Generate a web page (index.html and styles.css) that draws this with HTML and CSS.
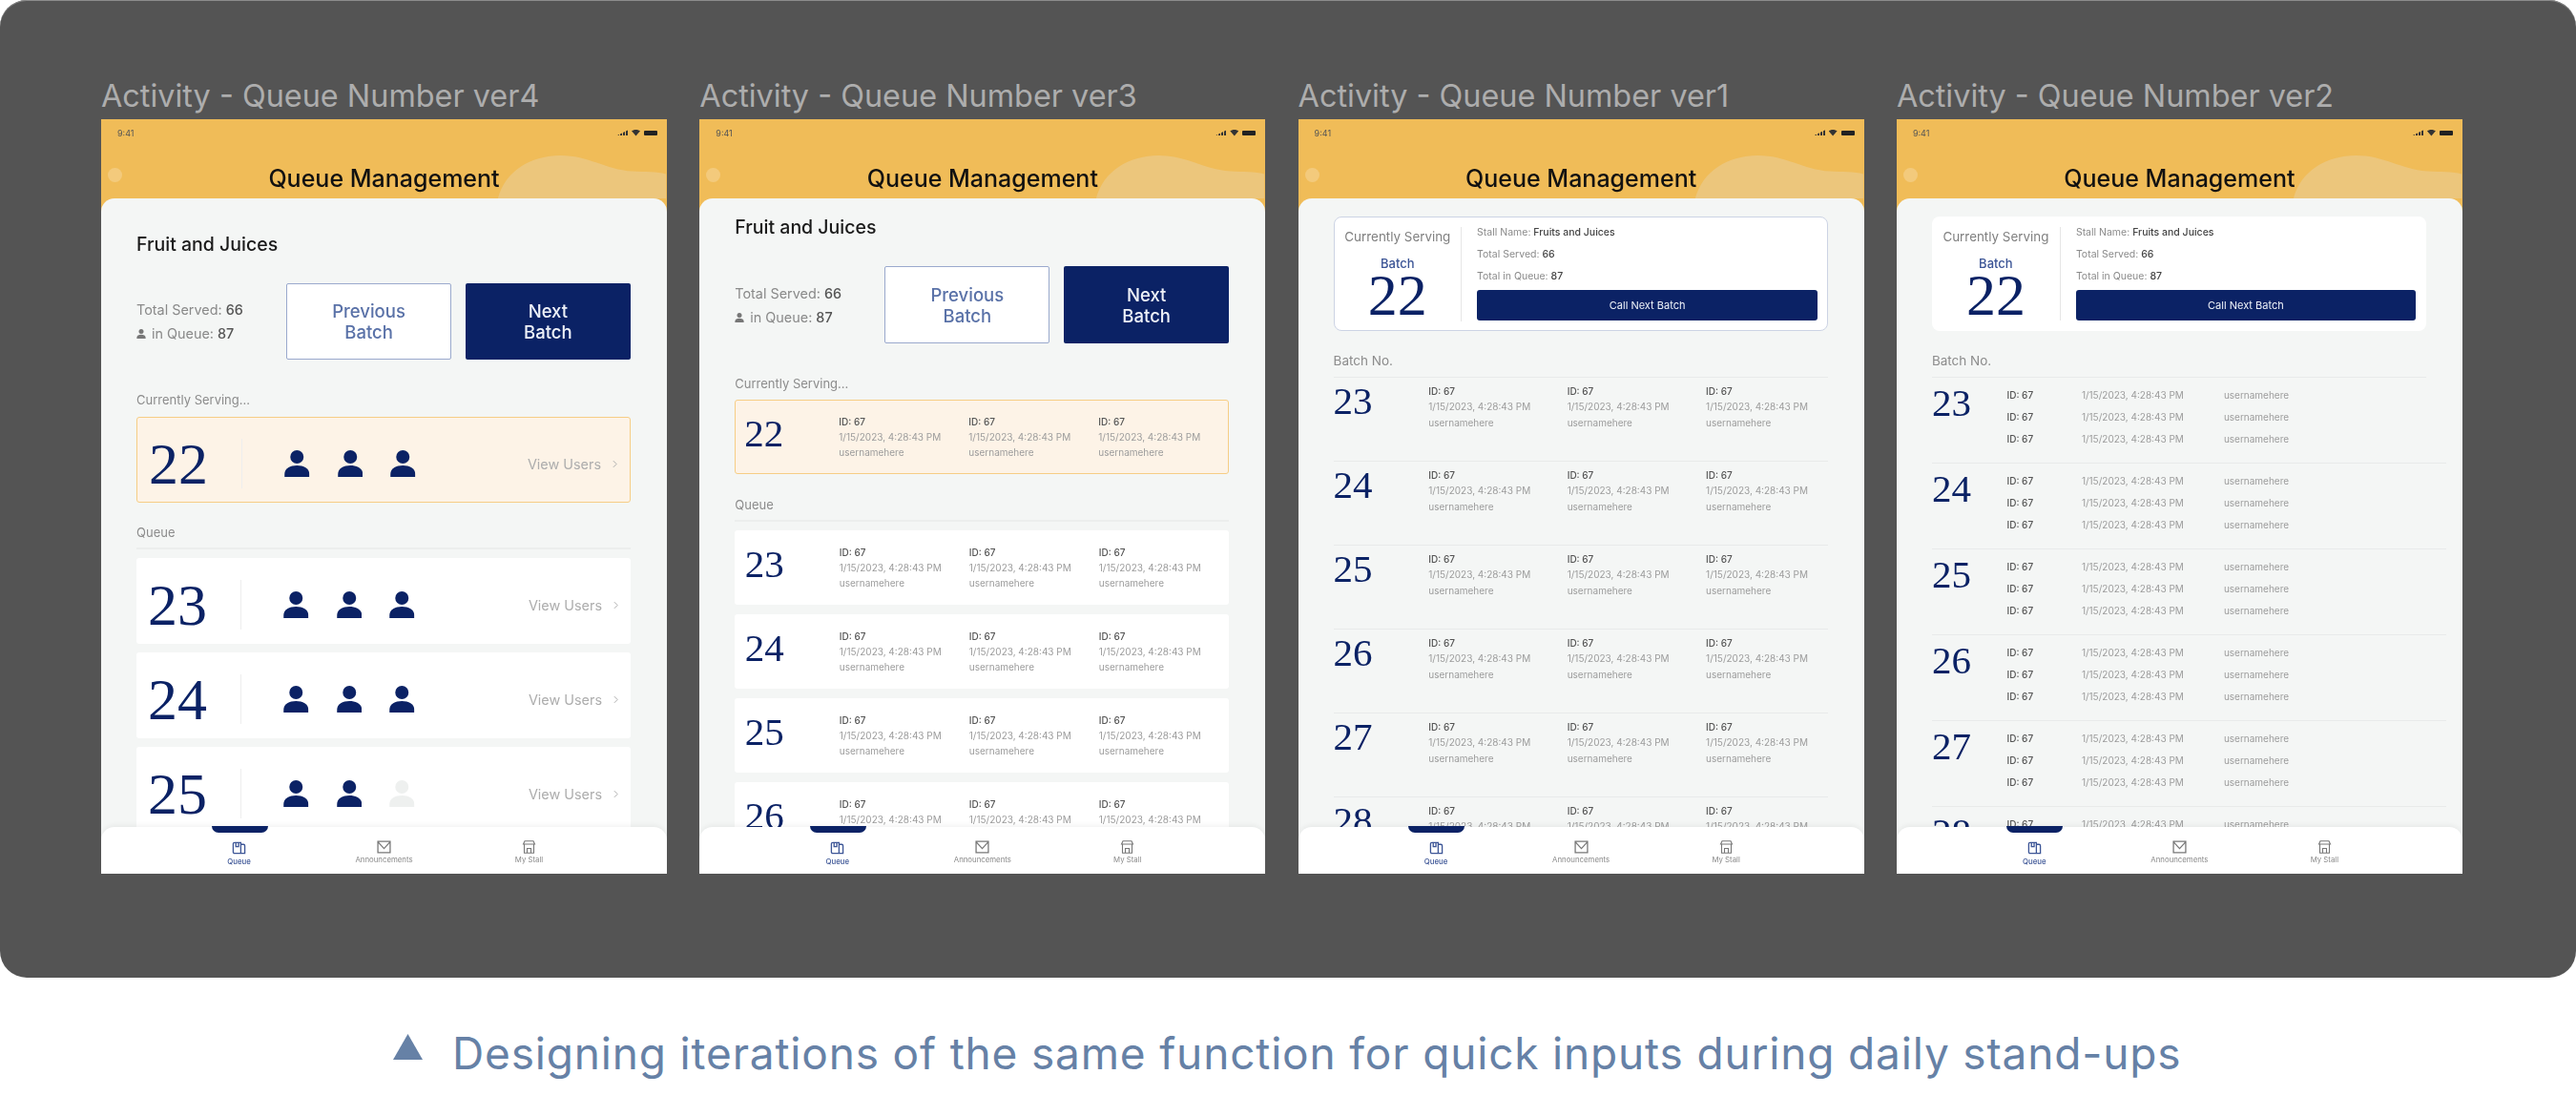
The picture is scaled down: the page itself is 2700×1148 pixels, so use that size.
FILE: index.html
```html
<!DOCTYPE html>
<html lang="en">
<head>
    <meta charset="UTF-8">
    <title>Activity - Queue Number</title>
    <link rel="stylesheet" href="styles.css">
</head>
<body>
    <svg class="defs" width="0" height="0">
        <symbol id="person" viewBox="0 0 26 28">
            <circle cx="13" cy="7" r="7"/>
            <path d="M0 28v-3C0 19 6 16 13 16s13 3 13 9v3z"/>
        </symbol>
        <symbol id="blob" viewBox="0 0 180 48">
            <path d="M0 48C8 18 36 2 67 2c30 0 48 15 77 17 14 1 26 0 36 3v26z"/>
        </symbol>
        <symbol id="icon-queue" viewBox="0 0 16 14">
            <path d="M1.500 2.500a1.500 1.500 0 0 1 1.500-1.500h7v12H3a1.500 1.500 0 0 1-1.500-1.500zM10 3h3a1.500 1.500 0 0 1 1.500 1.500V13H10M4.500 1v4.500h3V1" fill="none" stroke="currentColor" stroke-width="1.400"/>
        </symbol>
        <symbol id="icon-mail" viewBox="0 0 14 13">
            <path d="M1 1h12v11H1zM1 1.500l6 6.500 6-6.500" fill="none" stroke="currentColor" stroke-width="1.200"/>
        </symbol>
        <symbol id="icon-stall" viewBox="0 0 14 14">
            <path d="M2.500 .7h9l1.500 3.300H1zM2 4v9.300h10V4M5 13.300V8.500h4v4.800" fill="none" stroke="currentColor" stroke-width="1.100"/>
        </symbol>
    </svg>

    <div class="board">

        <!-- ver4 -->
        <section class="artboard">
            <h2 class="artboard-name">Activity - Queue Number ver4</h2>
            <div class="screen">
                <div class="status">
                    <span>9:41</span>
                    <span class="status-icons"><i class="signal"></i><i class="wifi"></i><i class="battery"></i></span>
                </div>
                <div class="header">
                    <i class="dot"></i>
                    <svg class="blob"><use href="#blob"/></svg>
                    <h1>Queue Management</h1>
                </div>
                <div class="sheet sheet-title-low">
                    <h3 class="stall-name">Fruit and Juices</h3>
                    <div class="summary">
                        <div class="stats">
                            <p>Total Served: <b>66</b></p>
                            <p><svg class="mini-person"><use href="#person"/></svg>in Queue: <b>87</b></p>
                        </div>
                        <button class="btn btn-outline">Previous<br>Batch</button>
                        <button class="btn btn-solid">Next<br>Batch</button>
                    </div>
                    <div class="section-label serving-label">Currently Serving...</div>
                    <div class="batch-card batch-serving">
                        <span class="batch-no">22</span><i class="batch-rule"></i>
                        <span class="people"><svg><use href="#person"/></svg><svg><use href="#person"/></svg><svg><use href="#person"/></svg></span>
                        <span class="view-users">View Users<svg class="chevron" viewBox="0 0 6 10"><path d="M1 1l4 4-4 4"/></svg></span>
                    </div>
                    <div class="section-label queue-label">Queue</div>
                    <div class="batch-card">
                        <span class="batch-no">23</span><i class="batch-rule"></i>
                        <span class="people"><svg><use href="#person"/></svg><svg><use href="#person"/></svg><svg><use href="#person"/></svg></span>
                        <span class="view-users">View Users<svg class="chevron" viewBox="0 0 6 10"><path d="M1 1l4 4-4 4"/></svg></span>
                    </div>
                    <div class="batch-card">
                        <span class="batch-no">24</span><i class="batch-rule"></i>
                        <span class="people"><svg><use href="#person"/></svg><svg><use href="#person"/></svg><svg><use href="#person"/></svg></span>
                        <span class="view-users">View Users<svg class="chevron" viewBox="0 0 6 10"><path d="M1 1l4 4-4 4"/></svg></span>
                    </div>
                    <div class="batch-card">
                        <span class="batch-no">25</span><i class="batch-rule"></i>
                        <span class="people"><svg><use href="#person"/></svg><svg><use href="#person"/></svg><svg class="empty"><use href="#person"/></svg></span>
                        <span class="view-users">View Users<svg class="chevron" viewBox="0 0 6 10"><path d="M1 1l4 4-4 4"/></svg></span>
                    </div>
                </div>
                <nav class="tabs">
                    <a class="tab active"><svg><use href="#icon-queue"/></svg>Queue</a>
                    <a class="tab"><svg><use href="#icon-mail"/></svg>Announcements</a>
                    <a class="tab"><svg><use href="#icon-stall"/></svg>My Stall</a>
                </nav>
            </div>
        </section>

        <!-- ver3 -->
        <section class="artboard">
            <h2 class="artboard-name">Activity - Queue Number ver3</h2>
            <div class="screen">
                <div class="status">
                    <span>9:41</span>
                    <span class="status-icons"><i class="signal"></i><i class="wifi"></i><i class="battery"></i></span>
                </div>
                <div class="header">
                    <i class="dot"></i>
                    <svg class="blob"><use href="#blob"/></svg>
                    <h1>Queue Management</h1>
                </div>
                <div class="sheet sheet-title-high">
                    <h3 class="stall-name">Fruit and Juices</h3>
                    <div class="summary summary-tall">
                        <div class="stats">
                            <p>Total Served: <b>66</b></p>
                            <p><svg class="mini-person"><use href="#person"/></svg>in Queue: <b>87</b></p>
                        </div>
                        <button class="btn btn-outline">Previous<br>Batch</button>
                        <button class="btn btn-solid">Next<br>Batch</button>
                    </div>
                    <div class="section-label serving-label-tight">Currently Serving...</div>
                    <div class="entry-card entry-serving">
                        <span class="batch-small">22</span>
                        <div class="entry"><b>ID: 67</b><span>1/15/2023, 4:28:43 PM</span><span>usernamehere</span></div>
                        <div class="entry"><b>ID: 67</b><span>1/15/2023, 4:28:43 PM</span><span>usernamehere</span></div>
                        <div class="entry"><b>ID: 67</b><span>1/15/2023, 4:28:43 PM</span><span>usernamehere</span></div>
                    </div>
                    <div class="section-label queue-label-wide">Queue</div>
                    <div class="entry-card">
                        <span class="batch-small">23</span>
                        <div class="entry"><b>ID: 67</b><span>1/15/2023, 4:28:43 PM</span><span>usernamehere</span></div>
                        <div class="entry"><b>ID: 67</b><span>1/15/2023, 4:28:43 PM</span><span>usernamehere</span></div>
                        <div class="entry"><b>ID: 67</b><span>1/15/2023, 4:28:43 PM</span><span>usernamehere</span></div>
                    </div>
                    <div class="entry-card">
                        <span class="batch-small">24</span>
                        <div class="entry"><b>ID: 67</b><span>1/15/2023, 4:28:43 PM</span><span>usernamehere</span></div>
                        <div class="entry"><b>ID: 67</b><span>1/15/2023, 4:28:43 PM</span><span>usernamehere</span></div>
                        <div class="entry"><b>ID: 67</b><span>1/15/2023, 4:28:43 PM</span><span>usernamehere</span></div>
                    </div>
                    <div class="entry-card">
                        <span class="batch-small">25</span>
                        <div class="entry"><b>ID: 67</b><span>1/15/2023, 4:28:43 PM</span><span>usernamehere</span></div>
                        <div class="entry"><b>ID: 67</b><span>1/15/2023, 4:28:43 PM</span><span>usernamehere</span></div>
                        <div class="entry"><b>ID: 67</b><span>1/15/2023, 4:28:43 PM</span><span>usernamehere</span></div>
                    </div>
                    <div class="entry-card">
                        <span class="batch-small">26</span>
                        <div class="entry"><b>ID: 67</b><span>1/15/2023, 4:28:43 PM</span><span>usernamehere</span></div>
                        <div class="entry"><b>ID: 67</b><span>1/15/2023, 4:28:43 PM</span><span>usernamehere</span></div>
                        <div class="entry"><b>ID: 67</b><span>1/15/2023, 4:28:43 PM</span><span>usernamehere</span></div>
                    </div>
                </div>
                <nav class="tabs">
                    <a class="tab active"><svg><use href="#icon-queue"/></svg>Queue</a>
                    <a class="tab"><svg><use href="#icon-mail"/></svg>Announcements</a>
                    <a class="tab"><svg><use href="#icon-stall"/></svg>My Stall</a>
                </nav>
            </div>
        </section>

        <!-- ver1 -->
        <section class="artboard">
            <h2 class="artboard-name">Activity - Queue Number ver1</h2>
            <div class="screen">
                <div class="status">
                    <span>9:41</span>
                    <span class="status-icons"><i class="signal"></i><i class="wifi"></i><i class="battery"></i></span>
                </div>
                <div class="header">
                    <i class="dot"></i>
                    <svg class="blob"><use href="#blob"/></svg>
                    <h1>Queue Management</h1>
                </div>
                <div class="sheet sheet-box">
                    <div class="serving-box serving-box-line">
                        <div class="serving-now">
                            <div class="serving-title">Currently Serving</div>
                            <div class="serving-batch">Batch</div>
                            <div class="serving-no">22</div>
                        </div>
                        <div class="serving-info">
                            <p>Stall Name: <b>Fruits and Juices</b></p>
                            <p>Total Served: <b>66</b></p>
                            <p>Total in Queue: <b>87</b></p>
                            <button class="btn-call">Call Next Batch</button>
                        </div>
                    </div>
                    <div class="section-label list-label">Batch No.</div>
                    <div class="list-row">
                        <span class="batch-small">23</span>
                        <div class="entry"><b>ID: 67</b><span>1/15/2023, 4:28:43 PM</span><span>usernamehere</span></div>
                        <div class="entry"><b>ID: 67</b><span>1/15/2023, 4:28:43 PM</span><span>usernamehere</span></div>
                        <div class="entry"><b>ID: 67</b><span>1/15/2023, 4:28:43 PM</span><span>usernamehere</span></div>
                    </div>
                    <div class="list-row">
                        <span class="batch-small">24</span>
                        <div class="entry"><b>ID: 67</b><span>1/15/2023, 4:28:43 PM</span><span>usernamehere</span></div>
                        <div class="entry"><b>ID: 67</b><span>1/15/2023, 4:28:43 PM</span><span>usernamehere</span></div>
                        <div class="entry"><b>ID: 67</b><span>1/15/2023, 4:28:43 PM</span><span>usernamehere</span></div>
                    </div>
                    <div class="list-row">
                        <span class="batch-small">25</span>
                        <div class="entry"><b>ID: 67</b><span>1/15/2023, 4:28:43 PM</span><span>usernamehere</span></div>
                        <div class="entry"><b>ID: 67</b><span>1/15/2023, 4:28:43 PM</span><span>usernamehere</span></div>
                        <div class="entry"><b>ID: 67</b><span>1/15/2023, 4:28:43 PM</span><span>usernamehere</span></div>
                    </div>
                    <div class="list-row">
                        <span class="batch-small">26</span>
                        <div class="entry"><b>ID: 67</b><span>1/15/2023, 4:28:43 PM</span><span>usernamehere</span></div>
                        <div class="entry"><b>ID: 67</b><span>1/15/2023, 4:28:43 PM</span><span>usernamehere</span></div>
                        <div class="entry"><b>ID: 67</b><span>1/15/2023, 4:28:43 PM</span><span>usernamehere</span></div>
                    </div>
                    <div class="list-row">
                        <span class="batch-small">27</span>
                        <div class="entry"><b>ID: 67</b><span>1/15/2023, 4:28:43 PM</span><span>usernamehere</span></div>
                        <div class="entry"><b>ID: 67</b><span>1/15/2023, 4:28:43 PM</span><span>usernamehere</span></div>
                        <div class="entry"><b>ID: 67</b><span>1/15/2023, 4:28:43 PM</span><span>usernamehere</span></div>
                    </div>
                    <div class="list-row">
                        <span class="batch-small">28</span>
                        <div class="entry"><b>ID: 67</b><span>1/15/2023, 4:28:43 PM</span><span>usernamehere</span></div>
                        <div class="entry"><b>ID: 67</b><span>1/15/2023, 4:28:43 PM</span><span>usernamehere</span></div>
                        <div class="entry"><b>ID: 67</b><span>1/15/2023, 4:28:43 PM</span><span>usernamehere</span></div>
                    </div>
                </div>
                <nav class="tabs">
                    <a class="tab active"><svg><use href="#icon-queue"/></svg>Queue</a>
                    <a class="tab"><svg><use href="#icon-mail"/></svg>Announcements</a>
                    <a class="tab"><svg><use href="#icon-stall"/></svg>My Stall</a>
                </nav>
            </div>
        </section>

        <!-- ver2 -->
        <section class="artboard">
            <h2 class="artboard-name">Activity - Queue Number ver2</h2>
            <div class="screen">
                <div class="status">
                    <span>9:41</span>
                    <span class="status-icons"><i class="signal"></i><i class="wifi"></i><i class="battery"></i></span>
                </div>
                <div class="header">
                    <i class="dot"></i>
                    <svg class="blob"><use href="#blob"/></svg>
                    <h1>Queue Management</h1>
                </div>
                <div class="sheet sheet-box">
                    <div class="serving-box">
                        <div class="serving-now">
                            <div class="serving-title">Currently Serving</div>
                            <div class="serving-batch">Batch</div>
                            <div class="serving-no">22</div>
                        </div>
                        <div class="serving-info">
                            <p>Stall Name: <b>Fruits and Juices</b></p>
                            <p>Total Served: <b>66</b></p>
                            <p>Total in Queue: <b>87</b></p>
                            <button class="btn-call">Call Next Batch</button>
                        </div>
                    </div>
                    <div class="section-label list-label">Batch No.</div>
                    <div class="table-row">
                        <span class="batch-small">23</span>
                        <div class="table-lines">
                            <b>ID: 67</b><span>1/15/2023, 4:28:43 PM</span><span>usernamehere</span>
                            <b>ID: 67</b><span>1/15/2023, 4:28:43 PM</span><span>usernamehere</span>
                            <b>ID: 67</b><span>1/15/2023, 4:28:43 PM</span><span>usernamehere</span>
                        </div>
                    </div>
                    <div class="table-row">
                        <span class="batch-small">24</span>
                        <div class="table-lines">
                            <b>ID: 67</b><span>1/15/2023, 4:28:43 PM</span><span>usernamehere</span>
                            <b>ID: 67</b><span>1/15/2023, 4:28:43 PM</span><span>usernamehere</span>
                            <b>ID: 67</b><span>1/15/2023, 4:28:43 PM</span><span>usernamehere</span>
                        </div>
                    </div>
                    <div class="table-row">
                        <span class="batch-small">25</span>
                        <div class="table-lines">
                            <b>ID: 67</b><span>1/15/2023, 4:28:43 PM</span><span>usernamehere</span>
                            <b>ID: 67</b><span>1/15/2023, 4:28:43 PM</span><span>usernamehere</span>
                            <b>ID: 67</b><span>1/15/2023, 4:28:43 PM</span><span>usernamehere</span>
                        </div>
                    </div>
                    <div class="table-row">
                        <span class="batch-small">26</span>
                        <div class="table-lines">
                            <b>ID: 67</b><span>1/15/2023, 4:28:43 PM</span><span>usernamehere</span>
                            <b>ID: 67</b><span>1/15/2023, 4:28:43 PM</span><span>usernamehere</span>
                            <b>ID: 67</b><span>1/15/2023, 4:28:43 PM</span><span>usernamehere</span>
                        </div>
                    </div>
                    <div class="table-row">
                        <span class="batch-small">27</span>
                        <div class="table-lines">
                            <b>ID: 67</b><span>1/15/2023, 4:28:43 PM</span><span>usernamehere</span>
                            <b>ID: 67</b><span>1/15/2023, 4:28:43 PM</span><span>usernamehere</span>
                            <b>ID: 67</b><span>1/15/2023, 4:28:43 PM</span><span>usernamehere</span>
                        </div>
                    </div>
                    <div class="table-row">
                        <span class="batch-small">28</span>
                        <div class="table-lines">
                            <b>ID: 67</b><span>1/15/2023, 4:28:43 PM</span><span>usernamehere</span>
                            <b>ID: 67</b><span>1/15/2023, 4:28:43 PM</span><span>usernamehere</span>
                            <b>ID: 67</b><span>1/15/2023, 4:28:43 PM</span><span>usernamehere</span>
                        </div>
                    </div>
                </div>
                <nav class="tabs">
                    <a class="tab active"><svg><use href="#icon-queue"/></svg>Queue</a>
                    <a class="tab"><svg><use href="#icon-mail"/></svg>Announcements</a>
                    <a class="tab"><svg><use href="#icon-stall"/></svg>My Stall</a>
                </nav>
            </div>
        </section>
    </div>

    <p class="caption">
        <svg class="caption-mark" viewBox="0 0 31 27"><path d="M15.500 0L31 27H0z"/></svg>
        Designing iterations of the same function for quick inputs during daily stand-ups
    </p>
</body>
</html>
```

FILE: styles.css
```css
* {
    box-sizing: border-box;
}
body {
    margin: 0;
    width: 2700px;
    height: 1148px;
    overflow: hidden;
    background-color: #fff;
    font-family: Inter, "Liberation Sans", sans-serif;
}
p, h1, h2, h3 {
    margin: 0;
}
.defs {
    position: absolute;
}

/* dark canvas */
.board {
    display: flex;
    gap: 34.3px;
    height: 1025px;
    padding: 80px 0 0 106px;
    background-color: #545454;
    border-radius: 28px;
    box-shadow: inset 0 1px 0 #8c8c8c;
}
.artboard {
    width: 593px;
}
.artboard-name {
    height: 42px;
    margin-bottom: 3px;
    font-size: 32.4px;
    font-weight: 400;
    line-height: 42px;
    color: #adadad;
    white-space: nowrap;
}
.screen {
    position: relative;
    height: 791px;
    overflow: hidden;
    background-color: #f0bc58;
    filter: blur(0.35px);
}

/* status + header */
.status {
    display: flex;
    justify-content: space-between;
    align-items: center;
    height: 28px;
    padding: 0 10px 0 17px;
    font-size: 9px;
    color: #555;
}
.status-icons {
    display: flex;
    align-items: center;
    gap: 3px;
}
.signal {
    width: 12px;
    height: 6px;
    background: repeating-linear-gradient(to right, #333 0 2px, transparent 2px 3px);
    clip-path: polygon(0 100%, 100% 0, 100% 100%);
}
.wifi {
    width: 9px;
    height: 7px;
    background-color: #333;
    clip-path: polygon(0 25%, 50% 0, 100% 25%, 50% 100%);
}
.battery {
    width: 14px;
    height: 5px;
    margin-left: 1px;
    background-color: #222;
    border-radius: 1px;
}
.header {
    position: relative;
    height: 55px;
    padding-top: 19px;
}
.header h1 {
    position: relative;
    font-size: 25px;
    font-weight: 500;
    line-height: 30px;
    text-align: center;
    color: #111;
}
.dot {
    position: absolute;
    top: 23px;
    left: 7px;
    width: 15px;
    height: 15px;
    background-color: #f3ca7c;
    border-radius: 50%;
}
.blob {
    position: absolute;
    right: 0;
    bottom: 0;
    width: 178px;
    height: 47px;
    fill: #ecc67c;
}

/* sheet */
.sheet {
    height: 708px;
    padding: 0 38px 0 37px;
    overflow: hidden;
    background-color: #f4f6f5;
    border-radius: 14px 14px 0 0;
}
.sheet-title-low {
    padding-top: 33px;
}
.sheet-title-high {
    padding-top: 15px;
}
.sheet-box {
    padding-top: 19px;
}
.stall-name {
    font-size: 19.5px;
    font-weight: 500;
    line-height: 30px;
    color: #1a1a1a;
}
.summary {
    display: flex;
    align-items: stretch;
    gap: 14.5px;
    height: 80px;
    margin-top: 26px;
}
.summary-tall {
    height: 81px;
}
.stats {
    display: flex;
    flex-direction: column;
    justify-content: center;
    width: 142.5px;
    font-size: 14.4px;
    line-height: 25px;
    color: #8a8a8a;
}
.stats b {
    font-weight: 500;
    color: #555;
}
.mini-person {
    width: 10px;
    height: 10px;
    margin-right: 6px;
    fill: #777;
}
.btn {
    width: 173.5px;
    padding: 0;
    font-family: inherit;
    font-size: 18.5px;
    font-weight: 500;
    line-height: 22px;
    border-radius: 2px;
}
.btn-outline {
    color: #5a72a8;
    background-color: #fff;
    border: 1.5px solid #9aa9cd;
}
.btn-solid {
    color: #eef1f8;
    background-color: #0b2265;
    border: 0;
}
.section-label {
    font-size: 13px;
    line-height: 20px;
    color: #8c8c8c;
}
.serving-label {
    margin-top: 32px;
    margin-bottom: 8px;
}
.serving-label-tight {
    margin-top: 32px;
    margin-bottom: 7px;
}
.queue-label {
    margin-top: 21px;
    margin-bottom: 9px;
    padding-bottom: 6px;
    border-bottom: 2px solid #eceeed;
}
.queue-label-wide {
    margin-top: 22px;
    margin-bottom: 9px;
    padding-bottom: 6px;
    border-bottom: 2px solid #eceeed;
}

/* ver4 rows */
.batch-card {
    display: flex;
    align-items: center;
    height: 90px;
    margin-bottom: 9px;
    padding: 8px 0 0 12px;
    background-color: #fff;
    border-radius: 3px;
}
.batch-serving {
    background-color: #fdf3e7;
    border: 1.5px solid #f6cd85;
}
.batch-no {
    width: 97px;
    font-family: "Liberation Serif", serif;
    font-size: 62px;
    line-height: 60px;
    color: #0b2265;
}
.batch-rule {
    width: 1px;
    height: 52px;
    background-color: #eeeeee;
}
.people {
    display: flex;
    gap: 29.2px;
    margin-left: 44px;
}
.people svg {
    width: 26.5px;
    height: 28px;
    fill: #0b2265;
}
.people .empty {
    fill: #eef0ef;
}
.view-users {
    display: flex;
    align-items: center;
    margin-left: auto;
    padding-right: 13px;
    font-size: 14.4px;
    color: #adadad;
}
.chevron {
    width: 5px;
    height: 9px;
    margin-left: 12px;
    fill: none;
    stroke: #adadad;
    stroke-width: 1.2;
}

/* ver3 + ver1 rows */
.entry-card {
    display: grid;
    grid-template-columns: 99px 136px 136px 136px;
    align-items: center;
    height: 78px;
    margin-bottom: 10px;
    padding-left: 10.5px;
    background-color: #fff;
    border-radius: 3px;
}
.entry-serving {
    background-color: #fdf3e7;
    border: 1.5px solid #f6cd85;
    padding-left: 9px;
}
.batch-small {
    font-family: "Liberation Serif", serif;
    font-size: 41px;
    line-height: 50px;
    color: #0b2265;
}
.entry-card .batch-small {
    margin-top: -8px;
}
.entry {
    display: flex;
    flex-direction: column;
    font-size: 10px;
    line-height: 16.3px;
    color: #9c9c9c;
    white-space: nowrap;
}
.entry b, .table-lines b {
    font-weight: 500;
    color: #555;
}

/* ver1 + ver2 top box */
.serving-box {
    display: flex;
    height: 120px;
    padding: 11px;
    background-color: #fff;
    border-radius: 8px;
}
.serving-box-line {
    padding: 9.5px;
    border: 1.5px solid #ccd3e4;
}
.serving-now {
    flex: none;
    width: 135px;
    margin-left: -11px;
    border-right: 1px solid #e6e6e6;
    text-align: center;
}
.serving-box-line .serving-now {
    margin-left: -9.5px;
    width: 133.5px;
}
.serving-title {
    font-size: 13.4px;
    line-height: 20px;
    color: #808080;
    white-space: nowrap;
}
.serving-batch {
    margin-top: 8px;
    font-size: 13px;
    font-weight: 500;
    line-height: 20px;
    color: #3c5596;
}
.serving-no {
    font-family: "Liberation Serif", serif;
    font-size: 62px;
    line-height: 46px;
    color: #0b2265;
}
.serving-info {
    flex: 1;
    padding-left: 16px;
    font-size: 10.5px;
    line-height: 14px;
    color: #8a8a8a;
}
.serving-info p {
    margin-top: -1px;
    margin-bottom: 9px;
}
.serving-info p + p {
    margin-top: 0;
}
.serving-info b {
    font-weight: 500;
    color: #444;
}
.btn-call {
    display: block;
    width: 100%;
    height: 32px;
    margin-top: -2px;
    font-family: inherit;
    font-size: 11px;
    color: #eef1f8;
    background-color: #0b2265;
    border: 0;
    border-radius: 3px;
}
.list-label {
    margin-top: 21px;
    padding-bottom: 7px;
    font-size: 13.5px;
    border-bottom: 1px solid #e8eaea;
}

/* ver1 rows */
.list-row {
    display: grid;
    grid-template-columns: 99.7px 145.4px 145.4px 145.4px;
    height: 88px;
    padding-top: 6px;
    border-bottom: 1px solid #e8eaea;
}
.list-row .batch-small {
    margin-top: -7px;
}

/* ver2 rows */
.table-row {
    display: flex;
    width: 539px;
    height: 90px;
    padding-top: 11px;
    border-bottom: 1px solid #e8eaea;
}
.table-row .batch-small {
    width: 78.6px;
    margin-top: -10px;
}
.table-lines {
    display: grid;
    grid-template-columns: 78.4px 149px auto;
    row-gap: 9px;
    align-content: start;
    font-size: 10px;
    line-height: 14px;
    color: #9c9c9c;
    white-space: nowrap;
}

/* bottom tabs, sits over the scrolling rows */
.tabs {
    position: absolute;
    left: 0;
    right: 0;
    bottom: 0;
    display: flex;
    justify-content: center;
    height: 49px;
    background-color: #fff;
    border-radius: 14px 14px 0 0;
    box-shadow: 0 -2px 5px rgba(0, 0, 0, 0.05);
}
.tab {
    position: relative;
    display: flex;
    flex-direction: column;
    align-items: center;
    width: 152px;
    padding-top: 14px;
    font-size: 7.8px;
    line-height: 11px;
    color: #8a8a8a;
}
.tab svg {
    width: 15px;
    height: 14px;
    margin-bottom: 1px;
    color: #777;
}
.active {
    padding-top: 15px;
    font-weight: 500;
    color: #3c5596;
}
.active svg {
    margin-bottom: 2px;
    color: #3c5596;
}
.active::before {
    content: "";
    position: absolute;
    top: -1px;
    left: 47px;
    width: 59px;
    height: 7px;
    background-color: #0b2265;
    border-radius: 0 0 8px 8px;
}

/* caption */
.caption {
    display: flex;
    align-items: center;
    gap: 31px;
    height: 80px;
    margin-top: 39px;
    padding-left: 412px;
    font-size: 46px;
    letter-spacing: 0.83px;
    line-height: 80px;
    color: #6681a6;
    white-space: nowrap;
}
.caption-mark {
    flex: none;
    width: 31px;
    height: 27px;
    margin-top: -14px;
    fill: #6681a6;
}
```
